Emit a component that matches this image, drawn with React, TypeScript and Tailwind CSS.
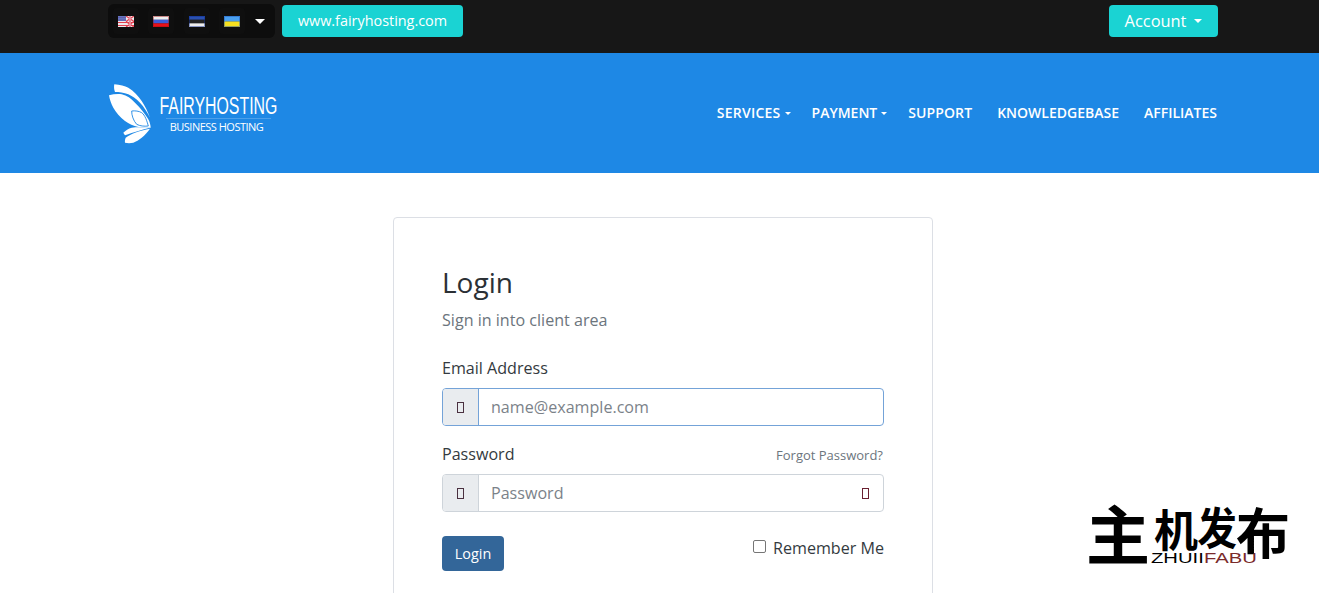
import React from "react";

const Tofu = ({ className = "" }: { className?: string }) => (
  <span className={`inline-block w-[7px] h-[11px] border border-[#4a3040] ${className}`} />
);

const Caret = ({ className = "" }: { className?: string }) => (
  <span className={`inline-block w-0 h-0 border-x-[3px] border-x-transparent border-t-[3px] border-t-white ${className}`} />
);

const FlagUS = () => (
  <svg width="16" height="11" viewBox="0 0 16 11">
    <rect width="16" height="11" fill="#efe9ec" />
    <path d="M0 1.5h8M0 4h8M0 6.5h16M0 9.5h16" stroke="#e2404f" strokeWidth="1.2" />
    <rect width="8" height="5" fill="#4a62b8" opacity=".85" />
    <path d="M8 0l8 5.5M16 0L8 5.5M8 11l8-5.5M16 11l-8-5.5" stroke="#e2404f" strokeWidth="1.2" />
    <path d="M12 0v11" stroke="#f4f0f2" strokeWidth="2" />
    <path d="M12 0v11" stroke="#d82a48" strokeWidth="1" />
  </svg>
);
const Stripes = ({ colors, border }: { colors: string[]; border: string }) => (
  <svg width="16" height="11" viewBox="0 0 16 11">
    {colors.map((c, i) => (
      <rect key={i} y={(i * 11) / colors.length} width="16" height={11 / colors.length + 0.2} fill={c} />
    ))}
    <rect x=".5" y=".5" width="15" height="10" fill="none" stroke={border} strokeOpacity=".45" />
  </svg>
);

const FlagCell = ({ children }: { children: React.ReactNode }) => (
  <span className="flex w-[26px] h-[26px] items-center justify-center rounded bg-[#0f0f0f]">{children}</span>
);

const Logo = () => (
  <svg width="44" height="61" viewBox="0 0 44 61" className="shrink-0">
    <path d="M6.3 1.3C12 2 17 3 20.3 4.7C26 8 30 13 33.7 18C37 23 40 29 42 34.7C39 29 36 24 32 19.7C28 15.5 24 13 20.3 11.3C16 9.5 11 9 7 9C6 6.5 5.8 3.5 6.3 1.3Z" fill="#fff" />
    <path d="M1 12.3C5 11.3 9.5 10.8 13.7 11.3C19 12.3 23 15.5 27 19.7C33 25.5 37 31 40.3 36.3C41.8 39 42.5 42 42.7 44.7C38 44.8 34 44.5 30.3 44C25.5 43 21 41 17 38C12 34 8 29.5 5.3 24.7C3 20.5 1.6 16 1 12.3Z" fill="#fff" />
    <path d="M23.7 28C27 27.6 31 28 33.7 29.7C37 32 39 38 40.3 43C36 43.5 32 43 28.7 41.3C25.5 38 23.5 32 23.7 28Z" fill="none" stroke="#1e88e5" strokeWidth="0.9" />
    <path d="M15.3 49.7C17.5 47.5 20.5 45.5 23.7 44.7C29 43.8 36 44.2 42 44.7C38 45.8 34 46.8 30.3 48C26 49.3 21 50.8 17 52.3C16.3 51.5 15.7 50.6 15.3 49.7Z" fill="#fff" />
    <path d="M17 59.7C16.7 58 17 56.2 17.7 54.7C20.5 52.8 23.7 51 27 49.7C31.5 48 37 46.7 42 45.7C39.5 49 37 52 33.7 54.7C31 57 28 58.7 25.3 59.7C22.5 60.3 19.5 60.3 17 59.7Z" fill="#fff" />
  </svg>
);

export default function App() {
  return (
    <div className="relative h-[593px] overflow-hidden bg-white text-[#343a40] font-['Open_Sans',sans-serif]">
      <header className="h-[53px] bg-[#171717]">
        <div className="ml-[108px] w-[1110px] flex items-start justify-between pt-[5px]">
          <div className="flex gap-[7px]">
            <div className="-mt-px flex h-[34px] w-[167px] items-center gap-[9.33px] rounded-md bg-[#0d0d0d] pl-[5px]">
              <FlagCell><FlagUS /></FlagCell>
              <FlagCell><Stripes colors={["#eeeeee", "#3d5bd8", "#e8101a"]} border="#a01010" /></FlagCell>
              <FlagCell><Stripes colors={["#2a50b0", "#222222", "#eeeeee"]} border="#0a2a90" /></FlagCell>
              <FlagCell><Stripes colors={["#4aa0f0", "#f5e020"]} border="#2050b0" /></FlagCell>
              <span className="inline-block w-0 h-0 border-x-[5px] border-x-transparent border-t-[5px] border-t-white ml-[0.5px]" />
            </div>
            <a className="flex h-[32px] w-[181px] items-center justify-center rounded bg-[#1ad3d3] text-[14.4px] text-white">www.fairyhosting.com</a>
          </div>
          <button className="flex h-[32px] w-[109px] items-center justify-center gap-2 rounded bg-[#1ad3d3] text-[16.4px] text-white">
            Account
            <span className="inline-block w-0 h-0 border-x-[4px] border-x-transparent border-t-[4px] border-t-white" />
          </button>
        </div>
      </header>

      <nav className="h-[120px] bg-[#1e88e5]">
        <div className="ml-[108px] w-[1110px] h-full flex items-center justify-between text-white">
          <div className="flex items-center gap-[7px]">
            <Logo />
            <div className="relative flex w-[118px] flex-col items-center">
              <span className="text-[23px] leading-[24px] font-['Liberation_Sans',sans-serif] scale-x-[0.69] whitespace-nowrap">FAIRYHOSTING</span>
              <span className="h-px w-[105px] bg-white/20" />
              <span className="mt-[2px] text-[11px] leading-[12px] whitespace-nowrap -ml-[3px] tracking-[-0.5px]">BUSINESS HOSTING</span>
            </div>
          </div>
          <ul className="flex items-center text-[14px] font-semibold leading-[20px] pr-[1px]">
            <li className="flex items-center gap-[4px]"><span className="tracking-[0.25px]">SERVICES</span><Caret /></li>
            <li className="ml-[21px] flex items-center gap-[4px]">PAYMENT<Caret /></li>
            <li className="ml-[21px] tracking-[0.1px]">SUPPORT</li>
            <li className="ml-[25px]">KNOWLEDGEBASE</li>
            <li className="ml-[25px]">AFFILIATES</li>
          </ul>
        </div>
      </nav>

      <main className="ml-[393px] mt-[44px] w-[540px] h-[500px] rounded border border-[#dcdfe5] px-[48px] pt-[47px]">
        <h1 className="text-[28px] leading-[34px] text-[#2b3035]">Login</h1>
        <p className="mt-[9px] text-[16.1px] leading-[24px] text-[#6c757d]">Sign in into client area</p>

        <label className="mt-[24px] block text-[16.1px] leading-[24px] text-[#343a40]">Email Address</label>
        <div className="mt-[8px] flex h-[38px] rounded border border-[#74a3d8] overflow-hidden">
          <span className="flex w-[36px] items-center justify-center bg-[#e9ecef] border-r border-[#74a3d8]"><Tofu /></span>
          <span className="flex flex-1 items-center pl-[12px] text-[16.1px] text-[#7b8289]">name@example.com</span>
        </div>

        <div className="mt-[16px] flex items-center justify-between h-[24px]">
          <label className="text-[16.1px] leading-[24px]">Password</label>
          <a className="text-[13px] text-[#6c757d] pt-[3px] pr-px">Forgot Password?</a>
        </div>
        <div className="mt-[8px] flex h-[38px] rounded border border-[#ced4da] overflow-hidden">
          <span className="flex w-[36px] items-center justify-center bg-[#e9ecef] border-r border-[#ced4da]"><Tofu /></span>
          <span className="flex flex-1 items-center pl-[12px] text-[16.1px] text-[#7b8289]">Password</span>
          <span className="flex w-[36px] items-center justify-center pl-[1px]"><Tofu className="border-[#6a2030]" /></span>
        </div>

        <div className="mt-[24px] flex items-start justify-between">
          <button className="h-[35px] w-[62px] rounded bg-[#336699] text-[14.4px] text-white">Login</button>
          <label className="flex items-center gap-[7px] text-[16.1px] leading-[24px] text-[#343a40]">
            <span className="-mt-[3px] inline-block h-[13px] w-[13px] rounded-[2px] border border-[#767676] bg-white" />
            Remember Me
          </label>
        </div>
      </main>

      <div className="absolute left-[1088px] top-[497px] h-[70px] w-[204px] select-none text-black font-['Noto_Sans_CJK_SC',sans-serif] font-bold">
        <span className="absolute left-[-2px] top-[2px] text-[64px] leading-[64px]">主</span>
        <span className="absolute left-[66px] top-[9px] text-[44px] leading-[44px]">机</span>
        <span className="absolute left-[107px] top-[7px] text-[44px] leading-[44px] scale-x-90">发</span>
        <span className="absolute left-[148px] top-[7px] text-[54px] leading-[54px]">布</span>
        <span className="absolute left-[63px] top-[54px] origin-left scale-x-[1.35] text-[15px] leading-[13px] font-['Liberation_Sans',sans-serif] font-normal whitespace-nowrap">
          ZHUII<span className="text-[#7a2a2a]">FABU</span>
        </span>
      </div>
    </div>
  );
}
